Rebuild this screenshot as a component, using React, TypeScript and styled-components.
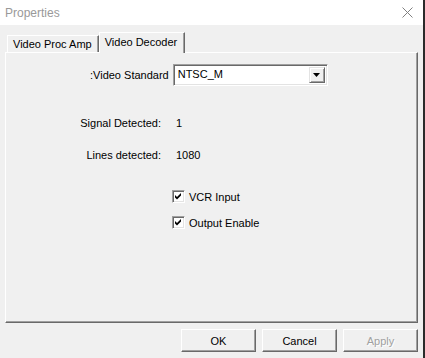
import styled, {createGlobalStyle} from 'styled-components';

const GlobalStyle = createGlobalStyle`
  html, body {
    margin: 0;
    padding: 0;
    background: #f0f0f0;
  }
  body {
    font-family: 'Liberation Sans', Arial, sans-serif;
    font-size: 11px;
    color: #000;
  }
`;

const Window = styled.div`
  width: 423px;
  height: 358px;
  border-right: 2px solid #2b2b2b;
  background: #f0f0f0;
  display: flex;
  flex-direction: column;
`;
const TitleBar = styled.div`
  height: 25px;
  background: #ffffff;
  display: flex;
  align-items: center;
  justify-content: space-between;
  padding: 0 10px 0 5px;
  > .title {
    font-size: 12px;
    color: #999;
  }
`;
const Body = styled.div`
  padding: 6px 5px 0 5px;
  display: flex;
  flex-direction: column;
`;
const TabStrip = styled.div`
  display: flex;
  align-items: flex-end;
  padding-left: 2px;
  height: 21px;
  position: relative;
  z-index: 1;
`;
const Tab = styled.div<{$active?: boolean}>`
  height: ${p => (p.$active ? 21 : 17)}px;
  margin-bottom: ${p => (p.$active ? -1 : 0)}px;
  padding: ${p => (p.$active ? '3px 7px 0 5px' : '2px 6px 0 5px')};
  box-sizing: border-box;
  background: #f0f0f0;
  border-top: 1px solid #fff;
  border-left: 1px solid #fff;
  border-right: 1px solid #696969;
  box-shadow: inset -1px 0 0 #a0a0a0;
  white-space: nowrap;
`;
const Panel = styled.div`
  width: 413px;
  height: 271px;
  box-sizing: border-box;
  border-top: 1px solid #fff;
  border-left: 1px solid #fff;
  border-right: 1px solid #696969;
  border-bottom: 1px solid #696969;
  box-shadow: inset -1px -1px 0 #a0a0a0;
  display: flex;
  flex-direction: column;
`;
const StandardRow = styled.div`
  display: flex;
  align-items: center;
  margin-top: 11px;
  padding-left: 84px;
  gap: 4px;
`;
const Combo = styled.div`
  width: 155px;
  height: 22px;
  box-sizing: border-box;
  background: #fff;
  border-top: 1px solid #a0a0a0;
  border-left: 1px solid #a0a0a0;
  border-right: 1px solid #fff;
  border-bottom: 1px solid #fff;
  box-shadow: inset 1px 1px 0 #696969, inset -1px -1px 0 #e3e3e3;
  display: flex;
  align-items: center;
  padding: 2px;
  > .value {
    flex: 1;
    padding-left: 2px;
    align-self: flex-start;
    padding-top: 1px;
  }
`;
const DropButton = styled.div`
  width: 16px;
  height: 16px;
  box-sizing: border-box;
  background: #f0f0f0;
  border-top: 1px solid #e3e3e3;
  border-left: 1px solid #e3e3e3;
  border-right: 1px solid #696969;
  border-bottom: 1px solid #696969;
  box-shadow: inset 1px 1px 0 #fff, inset -1px -1px 0 #a0a0a0;
  display: flex;
  align-items: center;
  justify-content: center;
`;
const InfoRow = styled.div<{$top: number}>`
  display: grid;
  grid-template-columns: 155px 1fr;
  margin-top: ${p => p.$top}px;
  > .label {
    text-align: right;
  }
  > .value {
    padding-left: 15px;
  }
`;
const CheckRow = styled.label<{$top: number}>`
  display: flex;
  align-items: center;
  gap: 4px;
  margin-top: ${p => p.$top}px;
  padding-left: 166px;
`;
const CheckBox = styled.span`
  width: 13px;
  height: 13px;
  box-sizing: border-box;
  background: #fff;
  border-top: 1px solid #a0a0a0;
  border-left: 1px solid #a0a0a0;
  border-right: 1px solid #fff;
  border-bottom: 1px solid #fff;
  box-shadow: inset 1px 1px 0 #696969, inset -1px -1px 0 #e3e3e3;
  display: flex;
  align-items: center;
  justify-content: center;
`;
const ButtonRow = styled.div`
  display: flex;
  justify-content: flex-end;
  gap: 6px;
  margin-top: 6px;
`;
const Button = styled.div<{$disabled?: boolean}>`
  width: 75px;
  height: 23px;
  box-sizing: border-box;
  background: #f0f0f0;
  border-top: 1px solid #fff;
  border-left: 1px solid #fff;
  border-right: 1px solid #696969;
  border-bottom: 1px solid #696969;
  box-shadow: inset -1px -1px 0 #a0a0a0;
  display: flex;
  align-items: center;
  justify-content: center;
  font-size: 11px;
  color: ${p => (p.$disabled ? '#a0a0a0' : '#000')};
  text-shadow: ${p => (p.$disabled ? '1px 1px 0 #fff' : 'none')};
`;

function Check() {
  return (
    <svg width="7" height="7" viewBox="0 0 7 7">
      <path d="M0 2 L2 4 L6 0 L6 2.5 L2 6.5 L0 4.5 Z" fill="#000" />
    </svg>
  );
}

export default function App() {
  return (
    <Window>
      <GlobalStyle />
      <TitleBar>
        <span className="title">Properties</span>
        <svg width="11" height="11" viewBox="0 0 11 11">
          <path d="M0.5 0.5 L10.5 10.5 M10.5 0.5 L0.5 10.5" stroke="#808080" strokeWidth="1" />
        </svg>
      </TitleBar>
      <Body>
        <TabStrip>
          <Tab>Video Proc Amp</Tab>
          <Tab $active>Video Decoder</Tab>
        </TabStrip>
        <Panel>
          <StandardRow>
            <span>:Video Standard</span>
            <Combo>
              <span className="value">NTSC_M</span>
              <DropButton>
                <svg width="7" height="4" viewBox="0 0 7 4">
                  <path d="M0 0 H7 L3.5 4 Z" fill="#000" />
                </svg>
              </DropButton>
            </Combo>
          </StandardRow>
          <InfoRow $top={31}>
            <span className="label">Signal Detected:</span>
            <span className="value">1</span>
          </InfoRow>
          <InfoRow $top={20}>
            <span className="label">Lines detected:</span>
            <span className="value">1080</span>
          </InfoRow>
          <CheckRow $top={29}>
            <CheckBox>
              <Check />
            </CheckBox>
            <span>VCR Input</span>
          </CheckRow>
          <CheckRow $top={13}>
            <CheckBox>
              <Check />
            </CheckBox>
            <span>Output Enable</span>
          </CheckRow>
        </Panel>
        <ButtonRow>
          <Button>OK</Button>
          <Button>Cancel</Button>
          <Button $disabled>Apply</Button>
        </ButtonRow>
      </Body>
    </Window>
  );
}
